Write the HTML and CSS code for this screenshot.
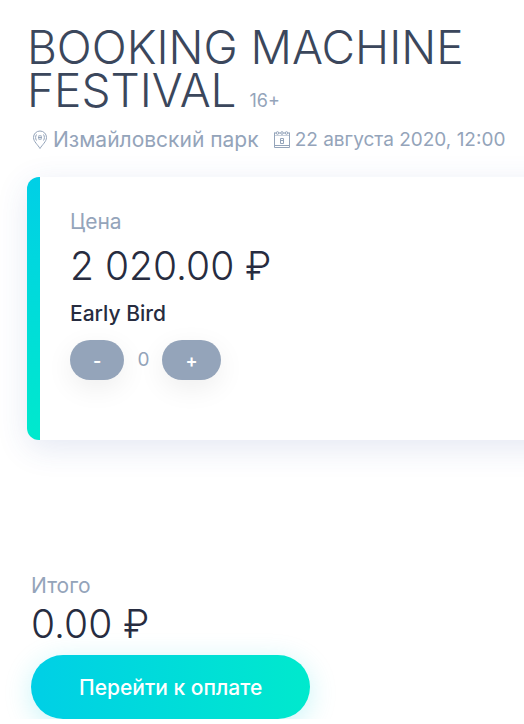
FILE: index.html
```html
<!DOCTYPE html>
<html lang="ru">
  <head>
    <meta charset="UTF-8" />
    <meta name="viewport" content="width=device-width, initial-scale=1.0" />
    <title>Booking Machine Festival</title>
    <link rel="stylesheet" href="styles.css">
  </head>

  <body>
    <div class="event">
      <h1 class="title">BOOKING MACHINE FESTIVAL <span class="age">16+</span></h1>
      <div class="info">
        <div class="infoItem place">
          <svg class="icon" viewBox="0 0 18 20" fill="none" stroke="currentColor">
            <path d="M9 18.500C7 15 2.500 11.500 2.500 7.500a6.500 6.500 0 0 1 13 0C15.500 11.500 11 15 9 18.500z" />
            <path d="M5.500 4.500c-1.200 2-1.200 4 0 6M12.500 4.500c1.200 2 1.200 4 0 6M7 6.500c1-1 3-1 4 0M7 8.500c1 1 3 1 4 0M7 7.500h4" />
          </svg>
          <span>Измайловский парк</span>
        </div>
        <div class="infoItem">
          <svg class="icon" viewBox="0 0 18 20" fill="none" stroke="currentColor">
            <path d="M1.500 2.500v15h15v-15M1.500 15.500h15" />
            <path d="M1.500 3h1.500M6 3h1.500M10.500 3h1.500M15 3h1.500" />
            <circle cx="4.500" cy="3" r="1.300" />
            <circle cx="9" cy="3" r="1.300" />
            <circle cx="13.500" cy="3" r="1.300" />
            <path d="M1.500 5.500h15" opacity="0.500" />
            <path d="M7.500 8.500h3v5h-3zM7.500 10.500h3" />
          </svg>
          <span>22 августа 2020, 12:00</span>
        </div>
      </div>
    </div>

    <!-- Билет -->
    <div class="ticket">
      <div class="label">Цена</div>
      <div class="price">2 020.00 ₽</div>
      <div class="ticketName">Early Bird</div>
      <div class="counter">
        <button class="countBtn minus" type="button">-</button>
        <span class="count">0</span>
        <button class="countBtn plus" type="button">+</button>
      </div>
    </div>

    <!-- Итого -->
    <div class="total">
      <div class="label">Итого</div>
      <div class="price">0.00 ₽</div>
      <button class="payBtn" type="button">Перейти к оплате</button>
    </div>
  </body>
</html>
```
FILE: styles.css
```css
* {
  box-sizing: border-box;
}

body {
  margin: 0;
  padding: 26px 0 0 27px;
  overflow-x: hidden;
  background: #fff;
  color: #94a4ba;
  font-family: Inter, "Noto Sans", sans-serif;
  font-size: 19px;
  line-height: 24px;
}

button {
  border: none;
  color: #fff;
  font-family: inherit;
  cursor: pointer;
}

.title {
  margin: 0;
  color: #3b475c;
  font-size: 46px;
  font-weight: 300;
  line-height: 43px;
}

.age {
  color: #94a4ba;
  font-size: 18px;
  font-weight: 400;
}

.info {
  display: flex;
  gap: 14px;
  margin-top: 6px;
  padding-left: 4px;
  white-space: nowrap;
}

.infoItem {
  display: flex;
  align-items: center;
  gap: 4px;
}

.place,
.label,
.ticketName {
  font-size: 21px;
}

.icon {
  width: 18px;
  height: 20px;
}

/* карточка уходит за правый край экрана */
.ticket {
  min-height: 263px;
  margin-top: 25px;
  margin-right: -40px;
  padding: 33px 30px 60px 43px;
  border-radius: 12px 0 0 12px;
  background: linear-gradient(#00cfe6, #00e9cd) left / 13px 100% no-repeat, #fff;
  box-shadow: 0 8px 32px rgba(50, 75, 160, 0.13);
}

.price {
  color: #272c40;
  font-size: 39px;
  font-weight: 300;
  line-height: 46px;
}

.ticket .price {
  margin-top: 9px;
}

.ticketName {
  margin-top: 13px;
  color: #272c40;
  font-weight: 500;
}

.counter {
  display: flex;
  align-items: center;
  gap: 13px;
  margin-top: 14px;
}

.countBtn {
  height: 40px;
  padding: 0 23px;
  border-radius: 20px;
  background: #94a4ba;
  box-shadow: 0 8px 28px rgba(0, 0, 0, 0.07);
  font-size: 18px;
  font-weight: 600;
}

.total {
  margin-top: 134px;
  padding-left: 4px;
}

.total .price {
  margin-top: 3px;
}

.payBtn {
  height: 64px;
  margin-top: 8px;
  padding: 0 48px;
  border-radius: 32px;
  background: linear-gradient(to right, #00cfe6, #00e9cd);
  box-shadow: 0 6px 28px rgba(0, 210, 225, 0.22);
  font-size: 21px;
  font-weight: 500;
}
```
